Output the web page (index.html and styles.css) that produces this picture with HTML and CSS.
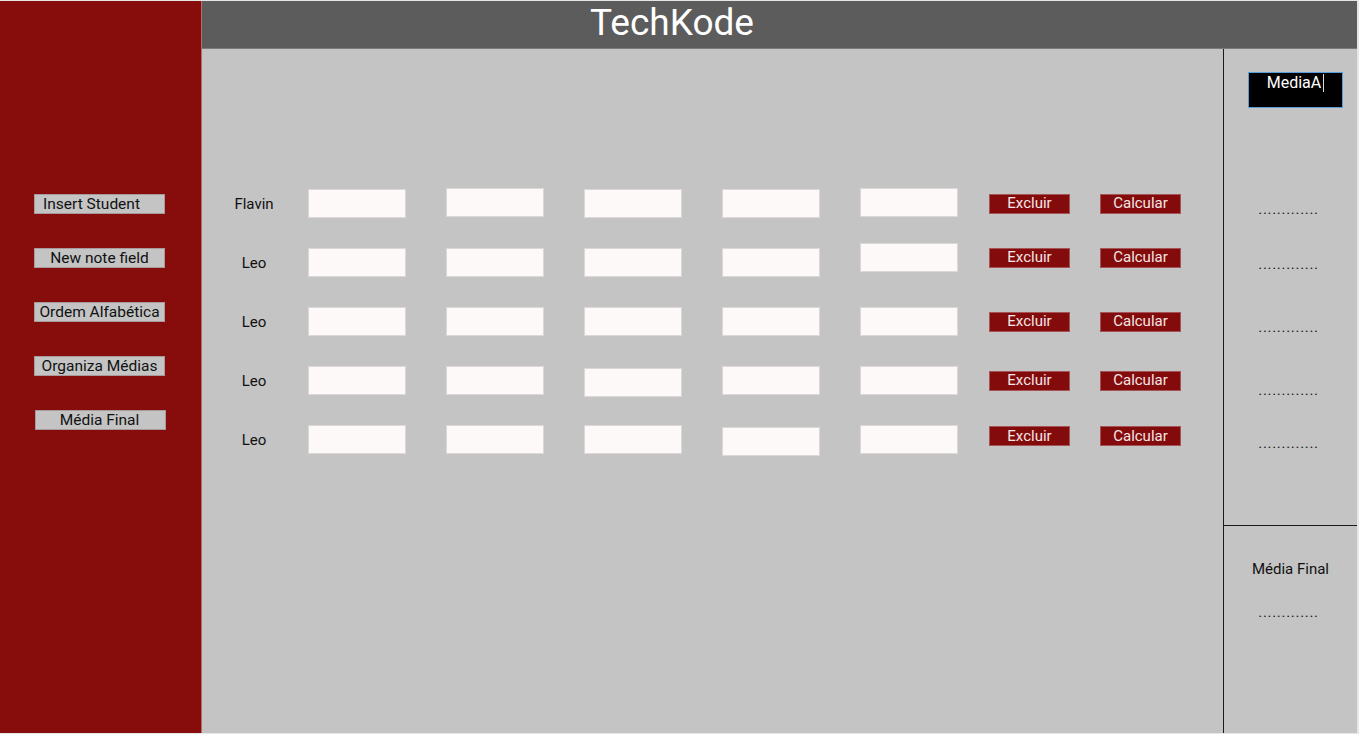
FILE: index.html
```html
<!DOCTYPE html>
<html lang="pt-BR">
<head>
  <meta charset="UTF-8" />
  <meta name="viewport" content="width=device-width, initial-scale=1.0"/>
  <title>TechKode</title>
  <link rel="stylesheet" href="styles.css">
</head>
<body>
  <aside class="sidebar">
    <button class="side-btn first">Insert Student</button>
    <button class="side-btn">New note field</button>
    <button class="side-btn">Ordem Alfabética</button>
    <button class="side-btn">Organiza Médias</button>
    <button class="side-btn last">Média Final</button>
  </aside>

  <div class="app">
    <header class="topbar">
      <h1>TechKode</h1>
    </header>

    <div class="workspace">
      <main class="students">
        <div class="row">
          <span class="name">Flavin</span>
          <div class="notes">
            <input class="note" type="text">
            <input class="note up" type="text">
            <input class="note" type="text">
            <input class="note" type="text">
            <input class="note up" type="text">
          </div>
          <div class="actions">
            <button class="act">Excluir</button>
            <button class="act">Calcular</button>
          </div>
        </div>
        <div class="row">
          <span class="name">Leo</span>
          <div class="notes">
            <input class="note" type="text">
            <input class="note" type="text">
            <input class="note" type="text">
            <input class="note" type="text">
            <input class="note lift" type="text">
          </div>
          <div class="actions lift">
            <button class="act">Excluir</button>
            <button class="act">Calcular</button>
          </div>
        </div>
        <div class="row">
          <span class="name">Leo</span>
          <div class="notes">
            <input class="note" type="text">
            <input class="note" type="text">
            <input class="note" type="text">
            <input class="note" type="text">
            <input class="note" type="text">
          </div>
          <div class="actions">
            <button class="act">Excluir</button>
            <button class="act">Calcular</button>
          </div>
        </div>
        <div class="row">
          <span class="name">Leo</span>
          <div class="notes">
            <input class="note" type="text">
            <input class="note" type="text">
            <input class="note down" type="text">
            <input class="note" type="text">
            <input class="note" type="text">
          </div>
          <div class="actions">
            <button class="act">Excluir</button>
            <button class="act">Calcular</button>
          </div>
        </div>
        <div class="row">
          <span class="name">Leo</span>
          <div class="notes">
            <input class="note" type="text">
            <input class="note" type="text">
            <input class="note" type="text">
            <input class="note down" type="text">
            <input class="note" type="text">
          </div>
          <div class="actions up2">
            <button class="act">Excluir</button>
            <button class="act">Calcular</button>
          </div>
        </div>
      </main>

      <section class="results">
        <div class="results-top">
          <div class="media-box">MediaA<span class="caret"></span></div>
          <div class="dots-list">
            <span class="dots">.............</span>
            <span class="dots">.............</span>
            <span class="dots">.............</span>
            <span class="dots">.............</span>
            <span class="dots">.............</span>
          </div>
        </div>
        <div class="results-bottom">
          <span class="final-label">Média Final</span>
          <span class="dots">.............</span>
        </div>
      </section>
    </div>
  </div>
</body>
</html>
```

FILE: styles.css
```css
* { margin: 0; padding: 0; box-sizing: border-box; }
html { height: 100%; }
body {
  height: 100%;
  padding: 1px 2px 1px 0;
  background: #e6e6e6;
  font-family: 'Roboto', 'Liberation Sans', sans-serif;
  color: #111;
  display: flex;
  overflow: hidden;
}

/* left menu */
.sidebar {
  width: 202px;
  flex-shrink: 0;
  background: #870d0d;
  border-right: 1px solid #b96a6a;
  padding: 193px 0 0 34px;
  display: flex;
  flex-direction: column;
  gap: 34px;
}
.side-btn {
  width: 131px;
  height: 20px;
  background: #c4c4c4;
  border: 1px solid #a89a9a;
  font-family: inherit;
  font-size: 15.5px;
  line-height: 17px;
  color: #111;
  text-align: center;
}
.side-btn.first { padding-right: 16px; }
.side-btn.last { margin-left: 1px; padding-right: 2px; }

.app {
  flex: 1;
  display: flex;
  flex-direction: column;
}
.topbar {
  height: 48px;
  background: #5c5c5c;
  border-bottom: 1px solid #7a7a7a;
  padding-left: 388px;
}
.topbar h1 {
  font-weight: 400;
  font-size: 37px;
  line-height: 43px;
  color: #fff;
}

.workspace {
  flex: 1;
  display: flex;
  background: #c4c4c4;
}

/* students table */
.students {
  width: 1021px;
  padding-top: 125px;
}
.row {
  height: 59px;
  display: flex;
  align-items: center;
}
.name {
  width: 104px;
  margin-right: 2px;
  text-align: center;
  font-size: 15px;
}
.notes {
  display: flex;
  align-items: center;
  gap: 40px;
}
.note {
  width: 98px;
  height: 29px;
  background: #fdf9f9;
  border: 1px solid #ddd7d7;
  outline: none;
}
.note.up { margin-bottom: 2px; }
.note.lift { margin-bottom: 10px; }
.note.down { margin-top: 3px; }
.actions {
  display: flex;
  gap: 30px;
  margin-left: 31px;
}
.actions.lift { margin-bottom: 10px; }
.actions.up2 { margin-bottom: 7px; }
.act {
  width: 81px;
  height: 20px;
  background: #840b0b;
  border: 1px solid #a45454;
  color: #f3e6e6;
  font-family: inherit;
  font-size: 15px;
  line-height: 17px;
}

/* right panel */
.results {
  width: 134px;
  border-left: 1px solid #1a1a1a;
  display: flex;
  flex-direction: column;
}
.results-top {
  height: 476px;
  padding-top: 23px;
  display: flex;
  flex-direction: column;
  align-items: center;
}
.media-box {
  width: 95px;
  height: 36px;
  margin-left: 10px;
  background: #000;
  border: 1px solid #5a9fdc;
  color: #fff;
  font-size: 16px;
  line-height: 18px;
  padding-top: 1px;
  text-align: center;
}
.caret {
  display: inline-block;
  width: 1px;
  height: 18px;
  margin-left: 2px;
  background: #ddd;
  vertical-align: -4px;
}
.dots-list {
  margin-top: 92px;
  display: flex;
  flex-direction: column;
  align-items: center;
}
.dots-list .dots:nth-child(2) { margin-top: 37px; }
.dots-list .dots:nth-child(3) { margin-top: 45px; }
.dots-list .dots:nth-child(4) { margin-top: 45px; }
.dots-list .dots:nth-child(5) { margin-top: 35px; }
.dots {
  font-size: 15px;
  line-height: 18px;
  letter-spacing: 0.7px;
  color: #1a1a1a;
  margin-left: -4px;
}
.results-bottom {
  flex: 1;
  border-top: 1px solid #1a1a1a;
  padding-top: 34px;
  display: flex;
  flex-direction: column;
  align-items: center;
  gap: 25px;
}
.final-label {
  font-size: 15px;
  line-height: 18px;
}
```
